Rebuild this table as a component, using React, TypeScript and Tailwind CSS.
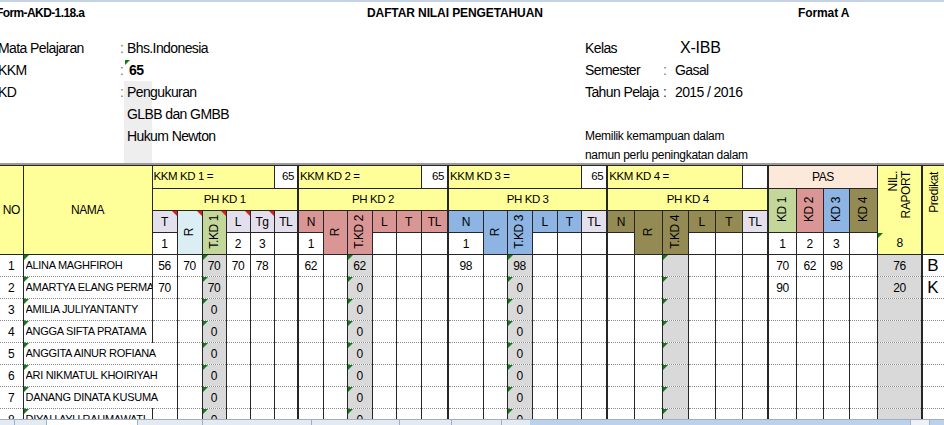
import React from "react";

const COLS = [
  "w-[23px]", "w-[129px]",
  "w-[25px]", "w-[25px]", "w-[24px]", "w-[24px]", "w-[24px]", "w-[24px]",
  "w-[25px]", "w-[24px]", "w-[25px]", "w-[24px]", "w-[25px]", "w-[27px]",
  "w-[35px]", "w-[24px]", "w-[25px]", "w-[25px]", "w-[24px]", "w-[26px]",
  "w-[27px]", "w-[28px]", "w-[26px]", "w-[27px]", "w-[27px]", "w-[26px]",
  "w-[28px]", "w-[27px]", "w-[26px]", "w-[28px]",
  "w-[45px]", "w-[40px]",
];
const THICK = new Set([8, 14, 20, 26, 31]);
const GRAYCOLS = new Set([4, 10, 16, 22, 30]);
const GREENCOLS = new Set([1, 4, 10, 16, 22]);

const YEL = "bg-[#ffff99]";
const LAV = "bg-[#e4dfec]";
const LBL = "bg-[#daeef3]";
const GRN = "bg-[#c4d79b]";
const PNK = "bg-[#da9694]";
const BLU = "bg-[#8db4e2]";
const OLV = "bg-[#948a54]";
const PCH = "bg-[#fde9d9]";

function GreenTri() {
  return (
    <svg className="absolute left-0 top-0" width="5" height="5" viewBox="0 0 5 5">
      <polygon points="0,0 5,0 0,5" fill="#0b7d12" />
    </svg>
  );
}
function RedTri() {
  return (
    <svg className="absolute right-0 top-0" width="5" height="5" viewBox="0 0 5 5">
      <polygon points="0,0 5,0 5,5" fill="#e41b1b" />
    </svg>
  );
}

function V({ children, className = "" }: { children: React.ReactNode; className?: string }) {
  return <div className={`inline-block [writing-mode:vertical-rl] rotate-180 leading-[13px] ${className}`}>{children}</div>;
}

type HP = {
  bg?: string;
  cs?: number;
  rs?: number;
  className?: string;
  children?: React.ReactNode;
  red?: boolean;
  green?: boolean;
  thick?: boolean;
};
function H({ bg = "bg-white", cs, rs, className = "", children, red, green, thick }: HP) {
  return (
    <td
      colSpan={cs}
      rowSpan={rs}
      className={`relative border border-solid border-[#262626] p-0 text-center align-middle ${bg} ${thick ? "border-l-2" : ""} ${className}`}
    >
      {red && <RedTri />}
      {green && <GreenTri />}
      {children}
    </td>
  );
}

type Row = { no: string; name: string; span?: boolean; v: Record<number, string> };
const ROWS: Row[] = [
  { no: "1", name: "ALINA MAGHFIROH", v: { 2: "56", 3: "70", 4: "70", 5: "70", 6: "78", 8: "62", 10: "62", 14: "98", 16: "98", 26: "70", 27: "62", 28: "98", 30: "76", 31: "B" } },
  { no: "2", name: "AMARTYA ELANG PERMATA", v: { 2: "70", 4: "70", 10: "0", 16: "0", 26: "90", 30: "20", 31: "K" } },
  { no: "3", name: "AMILIA JULIYANTANTY", v: { 4: "0", 10: "0", 16: "0" } },
  { no: "4", name: "ANGGA SIFTA PRATAMA", v: { 4: "0", 10: "0", 16: "0" } },
  { no: "5", name: "ANGGITA AINUR ROFIANA", span: true, v: { 4: "0", 10: "0", 16: "0" } },
  { no: "6", name: "ARI NIKMATUL KHOIRIYAH", span: true, v: { 4: "0", 10: "0", 16: "0" } },
  { no: "7", name: "DANANG DINATA KUSUMA", span: true, v: { 4: "0", 10: "0", 16: "0" } },
  { no: "8", name: "DIYAH AYU RAHMAWATI", v: { 4: "0", 10: "0", 16: "0" } },
];

function DataRow({ r }: { r: Row }) {
  const cells: React.ReactNode[] = [];
  for (let c = 0; c < 32; c++) {
    if (r.span && c === 2) continue;
    const base =
      "relative p-0 border border-solid border-[#262626] [border-top-style:dotted] [border-bottom-style:dotted] border-t-[#8a8a8a] border-b-[#8a8a8a]";
    const thick = THICK.has(c) ? "border-l-2" : "";
    const bg = GRAYCOLS.has(c) ? "bg-[#d9d9d9]" : "bg-white";
    let content: React.ReactNode = null;
    let align = "text-center";
    if (c === 0) {
      content = r.no;
    } else if (c === 1) {
      content = <div className="overflow-hidden whitespace-nowrap">{r.name}</div>;
      align = "text-left pl-[2px] text-[11px] tracking-[-0.3px]";
    } else if (c === 31) {
      content = r.v[c] ?? "";
      align = "text-left pl-[4px] text-[17px] leading-none overflow-hidden";
    } else {
      content = r.v[c] ?? "";
    }
    cells.push(
      <td
        key={c}
        colSpan={r.span && c === 1 ? 2 : undefined}
        className={`${base} ${thick} ${bg} ${align} ${c === 0 ? "border-l-0" : ""}`}
      >
        {GREENCOLS.has(c) && <GreenTri />}
        {content}
      </td>
    );
  }
  return <tr className="h-[22px]">{cells}</tr>;
}

function Header() {
  const lab = "h-[22px] flex items-center whitespace-nowrap";
  const grayCol = "bg-[linear-gradient(to_right,#eeeeee_0px,#eeeeee_28px,transparent_28px)]";
  return (
    <div className="h-[163px] shrink-0 border-b-2 border-[#9a9a9a] box-content">
      <div className="h-[2px] bg-[#c3d2e5]" />
      <div className="grid grid-cols-[367px_431px_1fr] h-[22px] items-center text-[12px] font-bold">
        <div className="-ml-[4px] tracking-[-0.6px]">Form-AKD-1.18.a</div>
        <div className="tracking-[-0.1px]">DAFTAR NILAI PENGETAHUAN</div>
        <div className="tracking-[-0.1px]">Format A</div>
      </div>
      <div className="h-[13px]" />
      <div className="flex text-[14px] tracking-[-0.6px]">
        <div className="w-[585px] grid grid-cols-[120px_4px_1fr]">
          <div className={`${lab} -ml-[2px]`}>Mata Pelajaran</div>
          <div className={`${lab} text-[#777]`}>:</div>
          <div className={`${lab} pl-[3px]`}>Bhs.Indonesia</div>

          <div className={`${lab} -ml-[2px]`}>KKM</div>
          <div className={`${lab} text-[#777]`}>:</div>
          <div className={`${lab} relative pl-[5px] font-bold`}>
            <svg className="absolute left-[1px] top-[1px]" width="5" height="5" viewBox="0 0 5 5">
              <polygon points="0,0 5,0 0,5" fill="#0b7d12" />
            </svg>
            65
          </div>

          <div className={`${lab} -ml-[2px]`}>KD</div>
          <div className={`${lab} text-[#777]`}>:</div>
          <div className={`${lab} pl-[3px] ${grayCol}`}>Pengukuran</div>

          <div className={lab} />
          <div className={lab} />
          <div className={`${lab} pl-[3px] ${grayCol}`}>GLBB dan GMBB</div>

          <div className={lab} />
          <div className={lab} />
          <div className={`${lab} pl-[3px] ${grayCol}`}>Hukum Newton</div>

          <div className="h-[16px]" />
          <div className="h-[16px]" />
          <div className={`h-[16px] ${grayCol}`} />
        </div>
        <div className="grid grid-cols-[78px_12px_1fr] content-start">
          <div className={lab}>Kelas</div>
          <div className={lab} />
          <div className={`${lab} pl-[5px] text-[16px] tracking-[-0.2px]`}>X-IBB</div>

          <div className={lab}>Semester</div>
          <div className={`${lab} text-[#777]`}>:</div>
          <div className={lab}>Gasal</div>

          <div className={`${lab} overflow-hidden`}>Tahun Pelaja</div>
          <div className={`${lab} text-[#333]`}>:</div>
          <div className={lab}>2015 / 2016</div>

          <div className="col-span-3 h-[22px]" />
          <div className="col-span-3 h-[21px] flex items-center text-[12px] tracking-[-0.3px] whitespace-nowrap">Memilik kemampuan dalam</div>
          <div className="col-span-3 h-[17px] flex items-center text-[12px] tracking-[-0.3px] whitespace-nowrap">namun perlu peningkatan dalam</div>
        </div>
      </div>
    </div>
  );
}

function Tabs() {
  const d = "border-r border-[#9fb0c6]";
  return (
    <div className="h-[6px] shrink-0 flex border-t border-[#9fb0c6]">
      <div className="w-[530px] flex bg-[#e4eaf2]">
        <div className={`w-[15px] ${d}`} />
        <div className={`w-[32px] ${d}`} />
        <div className={`w-[91px] bg-white ${d}`} />
        <div className={`w-[65px] ${d}`} />
        <div className={`w-[109px] ${d}`} />
        <div className={`w-[88px] ${d}`} />
        <div className={`w-[52px] ${d}`} />
        <div className={`w-[50px] ${d}`} />
        <div className="flex-1" />
      </div>
      <div className="flex-1 bg-[#bcd2ec]" />
      <div className="w-[20px] bg-[#eef2f8] border-x border-[#9fb3cc]" />
      <div className="w-[14px] bg-[#bcd2ec]" />
    </div>
  );
}

export default function App() {
  return (
    <div className="w-[944px] h-[425px] overflow-hidden bg-white text-black flex flex-col font-['Liberation_Sans',Arial,sans-serif]">
      <Header />
      <div className="flex-1 overflow-hidden">
        <table className="table-fixed border-collapse w-[962px] text-[12px] tracking-[-0.4px] leading-none">
          <colgroup>
            {COLS.map((w, i) => (
              <col key={i} className={w} />
            ))}
          </colgroup>
          <tbody>
            {/* Row A: KKM */}
            <tr className="h-[23px] text-[11.5px]">
              <H bg={YEL} rs={4} className="border-l-0 text-[12px]">NO</H>
              <H bg={YEL} rs={4} className="text-[12px]">NAMA</H>
              <H bg={YEL} cs={5} className="text-left pl-[1px]">KKM KD 1 =</H>
              <H className="text-right pr-[3px]">65</H>
              <H bg={YEL} cs={5} thick className="text-left pl-[1px]">KKM KD 2 =</H>
              <H className="text-right pr-[3px]">65</H>
              <H bg={YEL} cs={5} thick className="text-left pl-[1px]">KKM KD 3 =</H>
              <H className="text-right pr-[3px]">65</H>
              <H bg={YEL} cs={5} thick className="text-left pl-[1px]">KKM KD 4 =</H>
              <H />
              <H bg={PCH} cs={4} thick className="text-[12px]">PAS</H>
              <H bg={YEL} rs={3} className="align-top pt-[5px] border-b-0 text-[12px]">
                <V className="text-end">NIL.<br />RAPORT</V>
              </H>
              <H bg={YEL} rs={4} thick className="align-top pt-[6px] text-left pl-[5px] text-[12px]">
                <V className="text-end">Predikat</V>
              </H>
            </tr>
            {/* Row B: PH KD */}
            <tr className="h-[22px] text-[11.5px]">
              <H bg={YEL} cs={6}>PH KD 1</H>
              <H bg={YEL} cs={6} thick>PH KD 2</H>
              <H bg={YEL} cs={6} thick>PH KD 3</H>
              <H bg={YEL} cs={6} thick>PH KD 4</H>
              <H bg={GRN} rs={2} thick className="text-[12px]"><V>KD 1</V></H>
              <H bg={PNK} rs={2} className="text-[12px]"><V>KD 2</V></H>
              <H bg={BLU} rs={2} className="text-[12px]"><V>KD 3</V></H>
              <H bg={OLV} rs={2} className="text-[12px]"><V>KD 4</V></H>
            </tr>
            {/* Row C: sub headers */}
            <tr className="h-[22px]">
              <H bg={LAV} red>T</H>
              <H bg={LBL} rs={2} red><V>R</V></H>
              <H bg={GRN} rs={2} red><V>T.KD 1</V></H>
              <H bg={LAV} red>L</H>
              <H bg={LAV} red>Tg</H>
              <H bg={LAV}>TL</H>

              <H bg={PNK} thick>N</H>
              <H bg={PNK} rs={2}><V>R</V></H>
              <H bg={PNK} rs={2}><V>T.KD 2</V></H>
              <H bg={PNK}>L</H>
              <H bg={PNK}>T</H>
              <H bg={PNK}>TL</H>

              <H bg={BLU} thick>N</H>
              <H bg={BLU} rs={2}><V>R</V></H>
              <H bg={BLU} rs={2}><V>T.KD 3</V></H>
              <H bg={BLU}>L</H>
              <H bg={BLU}>T</H>
              <H bg={LAV}>TL</H>

              <H bg={OLV} thick>N</H>
              <H bg={OLV} rs={2}><V>R</V></H>
              <H bg={OLV} rs={2}><V>T.KD 4</V></H>
              <H bg={OLV}>L</H>
              <H bg={OLV}>T</H>
              <H bg={LAV}>TL</H>
            </tr>
            {/* Row D: numbers */}
            <tr className="h-[22px]">
              <H>1</H>
              <H>2</H>
              <H>3</H>
              <H />

              <H thick>1</H>
              <H />
              <H />
              <H />

              <H thick>1</H>
              <H />
              <H />
              <H />

              <H thick />
              <H />
              <H />
              <H />

              <H thick>1</H>
              <H>2</H>
              <H>3</H>
              <H />
              <H bg={YEL} green className="border-t-0">8</H>
            </tr>
            {ROWS.map((r, i) => (
              <DataRow key={i} r={r} />
            ))}
          </tbody>
        </table>
      </div>
      <Tabs />
    </div>
  );
}
